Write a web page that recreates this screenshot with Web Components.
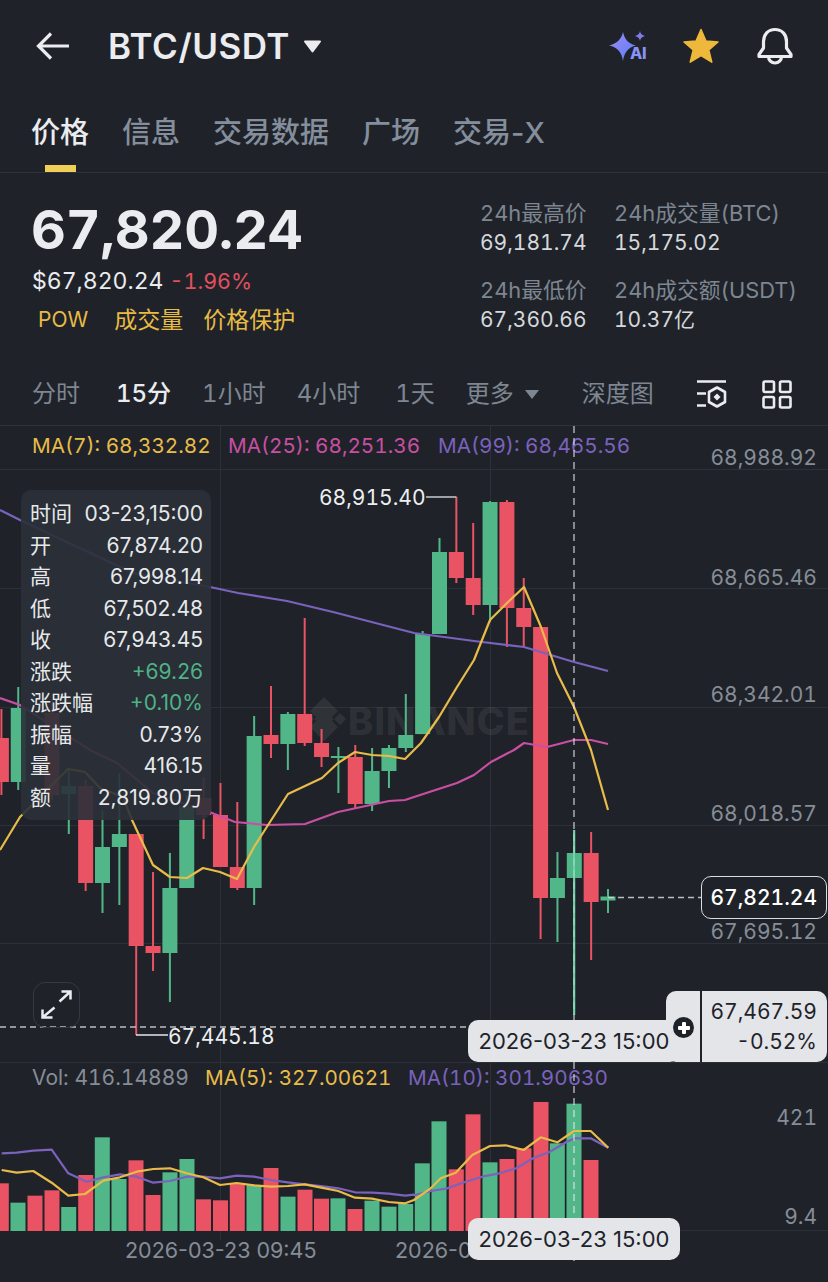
<!DOCTYPE html>
<html lang="zh"><head><meta charset="utf-8"><title>BTC/USDT</title>
<style>html,body{margin:0;background:#1f2329}body{font-family:Inter,"Noto Sans CJK SC",sans-serif}</style>
</head><body>
<kl-app>
  <kl-topbar title="BTC/USDT"></kl-topbar>
  <kl-tabs></kl-tabs>
  <kl-summary></kl-summary>
  <kl-intervals></kl-intervals>
  <kl-chart></kl-chart>
</kl-app>
<script>
const FONT='Inter,"Noto Sans CJK SC",sans-serif';
function shadow(el,html){el.attachShadow({mode:'open'}).innerHTML=html;}
customElements.define('kl-app',class extends HTMLElement{constructor(){super();shadow(this,`<style>:host{display:flex;flex-direction:column;width:828px;height:1282px;overflow:hidden;background:#1f2329;color:#eaecef;font-family:${FONT}}</style><slot></slot>`)}});
customElements.define('kl-topbar',class extends HTMLElement{constructor(){super();shadow(this,`<style>
:host{display:flex;align-items:center;height:92px;padding:0 35px 0 36px;box-sizing:border-box}
.t{font-size:35px;font-weight:600;color:#eaecef;margin-left:38px;letter-spacing:.5px}
.c{margin-left:13px}.sp{flex:1}.r{display:flex;align-items:center}
svg{display:block}
</style>
<svg width="34" height="30" viewBox="0 0 34 30" fill="none" stroke="#eaecef" stroke-width="3.2"><path d="M33 15H3M15 2.500 2.500 15 15 27.500"/></svg>
<span class="t">${this.getAttribute('title')}</span>
<svg class="c" width="19" height="13" viewBox="0 0 19 13"><path d="M2 1.500h15L9.500 11.500z" fill="#eaecef" stroke="#eaecef" stroke-width="2" stroke-linejoin="round"/></svg>
<span class="sp"></span>
<div class="r">
<kl-ai-icon></kl-ai-icon>
<svg style="margin-left:34px" width="38" height="38" viewBox="0 0 38 38"><path d="M19 2.500l5 11.500 12 1-9.200 8 3 12.200L19 28.500 8.200 35.200l3-12.200L2 15l12-1z" fill="#edb83b" stroke="#edb83b" stroke-linejoin="round" stroke-width="1.500"/></svg>
<svg style="margin-left:37px" width="36" height="38" viewBox="0 0 36 38" fill="none" stroke="#eaecef" stroke-width="3.200" stroke-linejoin="round"><path d="M18 2.500c-7 0-11.500 5-11.500 12v6.500L2 27.500v2h32v-2L29.500 21v-6.500c0-7-4.500-12-11.500-12z"/><path d="M11.500 29.500a6.500 6.500 0 0 0 13 0"/></svg>
</div>`)}});
customElements.define('kl-ai-icon',class extends HTMLElement{constructor(){super();shadow(this,`<style>
:host{display:block;width:40px;height:34px;position:relative}
svg{display:block}
span{position:absolute;left:22px;top:15px;font:800 16px/18px ${FONT};color:#8793f5;letter-spacing:-.2px}
</style><svg width="40" height="34" viewBox="0 0 40 34"><defs><linearGradient id="g" x1="0" y1="0" x2="1" y2="1"><stop offset="0" stop-color="#9b8cf7"/><stop offset="1" stop-color="#5c7cf2"/></linearGradient></defs>
<path d="M15 3c1.500 7 5 11.500 13 13.500-8 2-11.500 6.500-13 15.500-1.500-9-5-13.500-14-15.500C9 14.500 13.500 10 15 3z" fill="url(#g)"/>
<path d="M32 2c.6 3 2 4.300 5 5-3 .8-4.400 2.100-5 5-.6-2.900-2-4.200-5-5 3-.7 4.400-2 5-5z" fill="#7f7bea"/></svg><span>AI</span>`)}});
customElements.define('kl-tabs',class extends HTMLElement{constructor(){super();
const tabs=['价格','信息','交易数据','广场','交易-X'];
shadow(this,`<style>
:host{display:flex;gap:33px;height:81px;padding:0 31px;box-sizing:border-box;border-bottom:1px solid #2d333b}
div{position:relative;font-size:29px;line-height:34px;padding-top:24px;color:#848e9c;font-weight:500}
.on{color:#eaecef}
.on::after{content:"";position:absolute;left:14px;right:13px;top:73px;height:7px;background:#f0cf56}
</style>${tabs.map((t,i)=>`<div class="${i?'':'on'}">${t}</div>`).join('')}`)}});
customElements.define('kl-summary',class extends HTMLElement{constructor(){super();shadow(this,`<style>
:host{display:grid;grid-template-columns:448px 134px 1fr;height:190px;padding:25px 0 0 32px;box-sizing:border-box;font-variant-numeric:tabular-nums}
.p{font-size:54px;font-weight:700;line-height:60px;margin-top:2px;margin-left:-1px;color:#eaecef;letter-spacing:-.2px}
.u{font-size:23px;line-height:30px;margin-top:6px;color:#eaecef}
.u b{font-weight:400;font-size:21.500px;color:#e0505f;margin-left:6px}
.g{display:flex;font-size:23px;line-height:30px;margin-top:9px;color:#e8bb45;padding-left:6px;font-weight:400}
.g span:first-child{font-size:21px}
.g span:nth-child(2){margin-left:26px}.g span:nth-child(3){margin-left:20px}
.s{display:flex;flex-direction:column}
.l{font-size:21.800px;line-height:30px;color:#7e8692}
.v{font-size:21px;line-height:30px;color:#d5d8dc}
.l:nth-of-type(3){margin-top:17px}
</style>
<div><div class="p">67,820.24</div><div class="u">$67,820.24<b>-1.96%</b></div>
<div class="g"><span>POW</span><span>成交量</span><span>价格保护</span></div></div>
<div class="s"><div class="l">24h最高价</div><div class="v">69,181.74</div><div class="l">24h最低价</div><div class="v">67,360.66</div></div>
<div class="s"><div class="l">24h成交量(BTC)</div><div class="v">15,175.02</div><div class="l">24h成交额(USDT)</div><div class="v">10.37亿</div></div>`)}});
customElements.define('kl-intervals',class extends HTMLElement{constructor(){super();shadow(this,`<style>
:host{display:flex;align-items:center;height:63px;padding:0 0 0 32px;box-sizing:border-box;gap:31px;font-size:24px;color:#7e8692;border-bottom:1px solid #2d333b;line-height:30px;font-variant-numeric:tabular-nums}
.on{color:#eaecef;font-weight:500;margin-left:5px}
.m{display:flex;align-items:center;gap:10px}
.d{margin-left:11px}
.w{margin-left:4px}
svg{display:block}
</style><span>分时</span><span class="on">15分</span><span>1小时</span><span>4小时</span><span class="w">1天</span>
<span class="m">更多<svg width="16" height="11" viewBox="0 0 16 11"><path d="M1 1h14L8 10z" fill="#7e8692"/></svg></span><span class="d">深度图</span>
<svg style="margin-left:11px" width="32" height="28" viewBox="0 0 32 28" fill="none" stroke="#eaecef" stroke-width="2.600"><path d="M1 1.500h29M1 13.500h9M1 25.500h9"/><path d="M21 7.500l8 4.500v10l-8 4.500-8-4.500v-10z" stroke-linejoin="round"/><path d="M21 13.500l3.500 3.500-3.500 3.500-3.500-3.500z" fill="#eaecef" stroke="none"/></svg>
<svg style="margin-left:3px" width="30" height="29" viewBox="0 0 30 29" fill="none" stroke="#eaecef" stroke-width="2.600"><rect x="1.500" y="1.500" width="10.500" height="10.500" rx="1.500"/><rect x="18" y="1.500" width="10.500" height="10.500" rx="1.500"/><rect x="1.500" y="17" width="10.500" height="10.500" rx="1.500"/><rect x="18" y="17" width="10.500" height="10.500" rx="1.500"/></svg>`)}});
customElements.define('kl-ohlc',class extends HTMLElement{constructor(){super();
const rows=[['时间','03-23,15:00'],['开','67,874.20'],['高','67,998.14'],['低','67,502.48'],['收','67,943.45'],['涨跌','+69.26',1],['涨跌幅','+0.10%',1],['振幅','0.73%'],['量','416.15'],['额','2,819.80万']];
shadow(this,`<style>
:host{position:absolute;left:21px;top:64px;width:190px;height:330px;box-sizing:border-box;padding:8px 8px 0 9px;border-radius:10px;background:rgba(42,48,57,.9);font-size:21px;color:#e6e8ea}
.r{display:flex;justify-content:space-between;height:31.500px;line-height:31.500px}
.up{color:#4fb286}
</style>${rows.map(r=>`<div class="r"><span>${r[0]}</span><span class="${r[2]?'up':''}">${r[1]}</span></div>`).join('')}`)}});
customElements.define('kl-pill',class extends HTMLElement{constructor(){super();shadow(this,`<style>
:host{position:absolute;left:468px;width:212px;height:42px;display:flex;align-items:center;justify-content:center;background:#e3e5e9;border-radius:10px;color:#1e2329;font-size:22px}
</style><slot></slot>`)}});
customElements.define('kl-cross-price',class extends HTMLElement{constructor(){super();shadow(this,`<style>
:host{position:absolute;left:666px;top:565px;width:161px;height:71px;background:#e3e5e9;border-radius:10px;color:#1e2329;font-size:21px;display:block;font-variant-numeric:tabular-nums}
.l{position:absolute;left:33.500px;top:0;bottom:0;width:2px;background:#1e2329}
.t{position:absolute;right:10px;top:6px;text-align:right;line-height:30px}
</style><div class="l"></div><div class="t">67,467.59<br>-0.52%</div>`)}});
customElements.define('kl-cross-add',class extends HTMLElement{constructor(){super();shadow(this,`<style>
:host{position:absolute;left:673px;top:591px;width:21px;height:21px;border-radius:50%;background:#1e2329;display:block}
:host::before,:host::after{content:"";position:absolute;background:#fff;border-radius:1px}
:host::before{left:4.500px;right:4.500px;top:8.500px;height:4px}
:host::after{top:4.500px;bottom:4.500px;left:8.500px;width:4px}
</style>`)}});
customElements.define('kl-last-price',class extends HTMLElement{constructor(){super();shadow(this,`<style>
:host{position:absolute;left:701px;top:450px;width:126px;height:43px;box-sizing:border-box;border:1.500px solid #d9dce0;border-radius:10px;background:#1f2329;color:#fff;font-size:21px;font-weight:500;display:flex;align-items:center;justify-content:flex-end;padding-right:9px;font-variant-numeric:tabular-nums}
</style><slot></slot>`)}});
customElements.define('kl-expand',class extends HTMLElement{constructor(){super();shadow(this,`<style>
:host{position:absolute;left:33px;top:556px;width:47px;height:46px;box-sizing:border-box;border:1.500px solid #343942;border-radius:12px}
svg{display:block}
</style><svg width="44" height="43" viewBox="0 0 44 43" fill="none" stroke="#eaecef" stroke-width="2.500"><path d="M8.500 26.500v8h10M8.500 34.500l12-10M27.500 8.500h9v8M36.500 8.500l-11 10"/></svg>`)}});
customElements.define('kl-chart',class extends HTMLElement{constructor(){super();
const G='#52b788',R='#ea5363',Y='#e9bc4a',M='#c94fa3',P='#7a62bd',A='#868d97',GR='#2c3139';
const X=k=>608-16.85*k;
const c=[[0,G,896.500,900.500,889,913],[1,R,853,902,832,960],[2,G,853,878,830,1015],[3,G,878,898,852,942],[4,R,627,898,626,939],[5,R,608,627,578,647],[6,R,502,608,500,647],[7,G,502,605,501,622],[8,R,578,605,523,615],[9,R,552,578,497,583],[10,G,552,634,538,634],[11,G,634,734,631,734],[12,G,735,748,694,752],[13,G,748,771,745,788],[14,G,771,804,748,811],[15,R,757,804,745,808],[16,G,756,758,747,793],[17,R,743,757,729,767],[18,R,714,743,618,746],[19,G,714,744,712,770],[20,R,735,744,686,758],[21,G,736,888,716,905],[22,R,867,888,802,890],[23,R,815,867,783,867],[24,R,798,815,777,839],[25,G,807,888,795,888],[26,G,888,953,853,1002],[27,R,946,953,872,971],[28,R,834,946,834,1035],[29,G,834,847,773,905],[30,G,847,883,810,913],[31,R,786,883,780,891],[32,G,786,794,770,834],[33,R,713,795,700,800],[35,G,708,782,687,790],[36,R,738,782,709,795]];
const candles=c.map(([k,col,t,b,wt,wb])=>`<rect x="${X(k)-1}" y="${wt}" width="2" height="${wb-wt}" fill="${col}"/><rect x="${X(k)-7.500}" y="${t}" width="15" height="${Math.max(b-t,2)}" fill="${col}"/>`).join('');
const line=(pts,col,w=2.200)=>`<polyline points="${pts.map(p=>p.join(',')).join(' ')}" fill="none" stroke="${col}" stroke-width="${w}" stroke-linejoin="round"/>`;
const ma99=[[0,510],[20,520],[133,573],[210,587],[238,593],[287,601],[333,612],[414,633],[474,641],[524,647],[574,662],[608,671]];
const ma25=[[0,698],[20,705],[90,750],[117,763],[153,793],[212,813],[235,822],[267,825],[305,824],[338,812],[389,801],[405,800],[414,797],[457,783],[474,775],[491,762],[514,750],[524,743],[547,747],[574,740],[591,740],[608,744]];
const ma7=[[0,850],[20,817],[68,769],[85,772],[100,788],[123,797],[132,820],[153,865],[170,877],[187,878],[203,868],[220,872],[237,879],[254,847],[270,822],[288,794],[322,778],[338,763],[355,752],[372,755],[389,756],[405,759],[421,743],[439,717],[457,687],[474,660],[490,620],[507,603],[524,587],[541,627],[557,673],[574,707],[591,750],[608,810]];
const vols=[[1.300,370,R],[18,428,G],[35,407,R],[52,391,R],[68.700,441,G],[85.700,345,R],[102.300,232,G],[119,357,G],[136,301,R],[153,405,R],[170,337,G],[187,297,G],[203.500,418,R],[220.500,421,R],[237.300,372,R],[254,375,G],[271,324,R],[288,410,G],[305,389,R],[321.500,416,R],[338,415,G],[355,447,R],[372,422,G],[389,440,G],[405.700,432,G],[422.300,310,G],[439,184,G],[456.300,328,R],[473,163,R],[490,307,G],[507,297,R],[524,265,R],[541,126,R],[557.300,250,G],[574,131,G],[591,300,R]];
const volBars=vols.map(([x,t,col])=>{const y=1060+t/3;return `<rect x="${x-7.500}" y="${y}" width="15" height="${1231-y}" fill="${col}"/>`}).join('');
const L=(a,x0=0)=>a.map(([x,y])=>[+(x0+x/3).toFixed(1),+(1060+y/3).toFixed(1)]);
const v10=L([[5,280],[50,278],[100,272],[155,269],[205,340],[260,365],[310,352],[360,343],[410,350],[460,368],[510,363],[560,350],[610,350],[660,355],[710,347],[762,350],[813,360],[863,367],[914,373],[964,378],[1015,385],[1065,397],[1116,398],[1166,401],[1216,407],[1242,404]]).concat(L([[3,405],[50,393],[100,385],[155,365],[205,350],[256,340],[307,325],[357,295],[408,275],[458,245],[485,235],[530,235],[583,263]],414));
const v5=L([[5,330],[50,338],[100,333],[155,368],[205,407],[255,402],[310,362],[360,352],[410,335],[460,327],[510,325],[560,340],[610,352],[660,375],[710,369],[762,376],[813,380],[863,378],[914,373],[964,383],[1015,393],[1065,413],[1116,416],[1166,426],[1216,430],[1242,420]]).concat(L([[50,385],[80,355],[125,338],[175,285],[228,258],[275,256],[329,270],[380,232],[430,247],[480,213],[530,213],[583,263]],414));
const FS=21;
const T=(x,y,s,col,anchor='start',fs=FS,tn=true)=>`<text x="${x}" y="${y}" fill="${col}" font-size="${fs}" text-anchor="${anchor}" class="${tn?'tn':''}">${s}</text>`;
const grid=[469,588,707,825,943,1062].map(y=>`<path d="M0 ${y+.5}H828" stroke="${GR}"/>`).join('')+`<path d="M480 1230.500H828" stroke="${GR}"/><path d="M220.500 426V1240M490.500 426V1240" stroke="${GR}"/>`;
const tri=`<g fill="rgba(255,255,255,.075)" transform="translate(324 719)"><path d="M0-10l10 10-10 10-10-10z"/><path d="M0-22l14 14-6 6-8-8-8 8-6-6zM0 22l14-14-6-6-8 8-8-8-6 6z"/><path d="M-22 0l6-6 6 6-6 6zM22 0l-6-6-6 6 6 6z"/></g>`;
const wm=`<text x="348" y="735" fill="rgba(255,255,255,.075)" font-size="38" font-weight="800" letter-spacing="1">BINANCE</text>`;
shadow(this,`<style>
:host{display:block;position:relative;flex:1;font-family:${FONT}}
svg{display:block;position:absolute;left:0;top:0}
text{font-family:${FONT}}
.tn{font-variant-numeric:tabular-nums}
.top{pointer-events:none}
</style>
<svg width="828" height="856" viewBox="0 426 828 856">
${grid}${tri}${wm}
${T(32,453,'MA(7): 68,332.82',Y,'start',20.7)}${T(228,453,'MA(25): 68,251.36',M,'start',20.7)}${T(438,453,'MA(99): 68,465.56',P,'start',20.7)}
${T(817,465,'68,988.92',A,'end')}${T(817,585,'68,665.46',A,'end')}${T(817,702,'68,342.01',A,'end')}${T(817,821,'68,018.57',A,'end')}${T(817,939,'67,695.12',A,'end')}
${T(32,1085,'Vol: 416.14889',A)}${T(205,1085,'MA(5): 327.00621',Y,'start',20.7)}${T(408,1085,'MA(10): 301.90630',P,'start',20.7)}
${T(817,1125,'421',A,'end')}${T(817,1224,'9.4',A,'end')}
${T(125,1258,'2026-03-23 09:45',A,'start',21.5,false)}${T(395,1258,'2026-0',A,'start',21.5,false)}
${candles}${volBars}
${line(ma99,P)}${line(ma25,M)}${line(ma7,Y)}${line(v10,P)}${line(v5,Y)}
</svg>
<kl-ohlc></kl-ohlc>
<svg class="top" width="828" height="856" viewBox="0 426 828 856">
<path d="M574 426V1265" stroke="#e8eaec" stroke-opacity=".8" stroke-width="1.300" stroke-dasharray="7 5"/>
<path d="M574 830V1015" stroke="#7fd8b4" stroke-width="1.800" stroke-opacity=".85"/>
<path d="M0 1027H470" stroke="#d7d9dc" stroke-opacity=".85" stroke-width="1.300" stroke-dasharray="6 4"/>
<path d="M608 897.500H701" stroke="#d7d9dc" stroke-opacity=".85" stroke-width="1.300" stroke-dasharray="6 4"/>
<path d="M426 497H456.500" stroke="#c9ccd0" stroke-width="1.500" fill="none"/>
<path d="M136 1035H168" stroke="#e6e8ea" stroke-width="1.500" fill="none"/>
${T(319,505,'68,915.40','#eceef0')}${T(168,1044,'67,445.18','#eceef0')}
</svg>
<kl-expand></kl-expand>
<kl-last-price>67,821.24</kl-last-price>
<kl-cross-price></kl-cross-price>
<kl-pill style="top:594px">2026-03-23 15:00</kl-pill>
<kl-cross-add></kl-cross-add>
<kl-pill style="top:792px">2026-03-23 15:00</kl-pill>`)}});
</script>
</body></html>
